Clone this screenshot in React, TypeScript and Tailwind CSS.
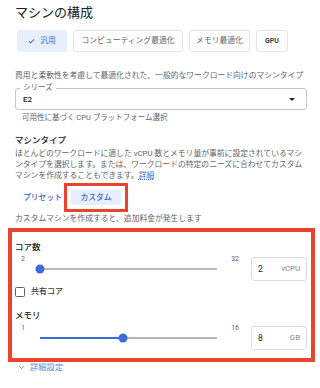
import { Check, ChevronDown } from 'lucide-react';

const font = { fontFamily: "Roboto, 'Noto Sans CJK JP', sans-serif" };

interface SliderRowProps {
  min: number;
  max: number;
  value: number;
  unit: string;
}

function SliderRow({ min, max, value, unit }: SliderRowProps) {
  const pct = ((value - min) / (max - min)) * 100;
  return (
    <div className="flex items-start">
      <div className="w-[230px]">
        <div className="flex justify-between px-[6px] text-[7px] leading-[10px] text-[#5f6368]">
          <span>{min}</span>
          <span>{max}</span>
        </div>
        <div className="flex h-[10px] items-center pl-[25px]">
          <div className="relative h-[1.5px] w-[177px] bg-[#b5b8bc]">
            <div className="h-full bg-[#3d6bd9]" style={{ width: `${pct}%` }} />
            <div
              className="absolute top-1/2 h-[9px] w-[9px] -translate-x-1/2 -translate-y-1/2 rounded-full bg-[#3d6bd9]"
              style={{ left: `${pct}%` }}
            />
          </div>
        </div>
      </div>
      <div className="ml-[6px] mt-[3px] flex h-[24px] w-[56px] items-center justify-between rounded-[3px] border border-[#dadce0] px-[6px]">
        <span className="text-[8.5px] text-[#202124]">{value}</span>
        <span className="text-[7.8px] text-[#80868b]">{unit}</span>
      </div>
    </div>
  );
}

export default function App() {
  return (
    <div className="h-[388px] w-[320px] overflow-hidden bg-white pl-[15px]" style={font}>
      <div className="mt-[5px] text-[13px] leading-[16px] text-[#202124]">マシンの構成</div>

      {/* machine family chips */}
      <div className="ml-[2px] mt-[9px] flex gap-[6px] text-[7.8px]">
        <div className="flex h-[22px] w-[50px] items-center justify-center gap-[5px] rounded-[3px] bg-[#e8effc] text-[#3f68d0]">
          <Check className="h-[7px] w-[7px]" strokeWidth={3.5} />
          <span>汎用</span>
        </div>
        <div className="flex h-[22px] w-[110px] items-center justify-center rounded-[3px] border border-[#e3e5e8] text-[#5f6368]">
          コンピューティング最適化
        </div>
        <div className="flex h-[22px] w-[61px] items-center justify-center rounded-[3px] border border-[#e3e5e8] text-[#5f6368]">
          メモリ最適化
        </div>
        <div className="flex h-[22px] w-[32px] items-center justify-center rounded-[3px] border border-[#e3e5e8] text-[7px] font-bold text-[#3c4043]">
          GPU
        </div>
      </div>

      <div className="mt-[19px] text-[7.8px] leading-[10px] text-[#5f6368]">
        費用と柔軟性を考慮して最適化された、一般的なワークロード向けのマシンタイプ
      </div>

      {/* series select */}
      <div className="relative mt-[7px] flex h-[22px] w-[292px] items-center justify-between rounded-[3px] border border-[#c4c7cb] pl-[7px] pr-[11px]">
        <span className="absolute -top-[6px] left-[4px] bg-white px-[3px] text-[7.5px] leading-[10px] text-[#5f6368]">
          シリーズ
        </span>
        <span className="pt-[2px] text-[8px] font-medium text-[#202124]">E2</span>
        <span className="h-0 w-0 border-x-[3px] border-t-[3.5px] border-x-transparent border-t-[#202124]" />
      </div>
      <div className="mt-[3px] pl-[7px] text-[7.5px] leading-[10px] text-[#5f6368]">
        可用性に基づく CPU プラットフォーム選択
      </div>

      <div className="mt-[12px] text-[8.5px] font-medium leading-[10px] text-[#202124]">マシンタイプ</div>
      <p className="mt-[3px] w-[292px] text-[7.8px] leading-[11px] text-[#5f6368]">
        ほとんどのワークロードに適した vCPU 数とメモリ量が事前に設定されているマシンタイプを選択します。または、ワークロードの特定のニーズに合わせてカスタムマシンを作成することもできます。
        <span className="text-[#3f68d0] underline decoration-dotted">詳細</span>
      </p>

      {/* preset / custom tabs */}
      <div className="mt-[2px] flex items-center text-[7.8px] font-medium text-[#3f68d0]">
        <span className="ml-[8px] mr-[2px]">プリセット</span>
        <div className="border-[3px] border-[#e8442f] p-[4px]">
          <div className="flex h-[15px] w-[50px] items-center justify-center bg-[#e8effc]">カスタム</div>
        </div>
      </div>

      <div className="mt-[2px] text-[7.8px] leading-[10px] text-[#5f6368]">
        カスタムマシンを作成すると、追加料金が発生します
      </div>

      {/* custom machine panel */}
      <div className="-ml-[7px] mt-[4px] w-[307px] border-4 border-[#e8442f] pb-[8px] pl-[3px] pr-[4px] pt-[10px]">
        <div className="text-[8.5px] font-medium leading-[10px] text-[#202124]">コア数</div>
        <div className="mt-[2px]">
          <SliderRow min={2} max={32} value={2} unit="vCPU" />
        </div>

        <label className="mt-[6px] flex h-[10px] items-center gap-[6px]">
          <span className="h-[10px] w-[10px] rounded-[1.5px] border-[1.5px] border-[#5f6368]" />
          <span className="text-[8px] font-medium text-[#3c4043]">共有コア</span>
        </label>

        <div className="mt-[13px] text-[8.5px] font-medium leading-[10px] text-[#202124]">メモリ</div>
        <div className="mt-[3px]">
          <SliderRow min={1} max={16} value={8} unit="GB" />
        </div>
      </div>

      <div className="flex h-[10px] items-center gap-[4px] pl-[2px] text-[8.3px] text-[#5c86e0]">
        <ChevronDown className="h-[9px] w-[9px]" strokeWidth={2.5} />
        <span>詳細設定</span>
      </div>
    </div>
  );
}
